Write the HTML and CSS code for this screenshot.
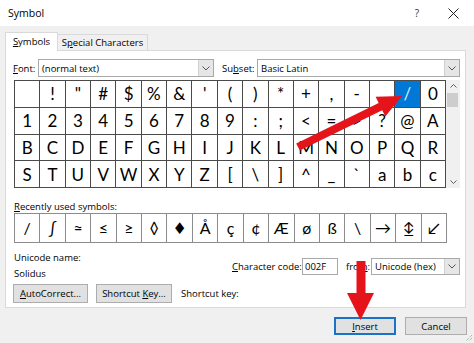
FILE: index.html
```html
<!DOCTYPE html>
<html>
<head>
<meta charset="utf-8">
<title>Symbol</title>
<link rel="stylesheet" href="styles.css">
</head>
<body>
<div class="window">
  <div class="titlebar">
    <span class="title">Symbol</span>
    <span class="help">?</span>
    <svg class="close" width="11" height="11" viewBox="0 0 11 11"><path d="M0.5 0.5 L10.5 10.5 M10.5 0.5 L0.5 10.5" stroke="#222" stroke-width="1"/></svg>
  </div>
  <div class="content">
    <div class="tabs">
      <div class="tab active"><span><u>S</u>ymbols</span></div>
      <div class="tab"><span>S<u>p</u>ecial Characters</span></div>
    </div>
    <div class="panel">
      <div class="font-row">
        <span class="lbl font-lbl"><u>F</u>ont:</span>
        <div class="select font-sel"><span class="val">(normal text)</span><span class="arrow"><svg width="8" height="5" viewBox="0 0 8 5"><path d="M0.5 0.5 L4 4 L7.5 0.5" fill="none" stroke="#555" stroke-width="1"/></svg></span></div>
        <span class="lbl subset-lbl">Su<u>b</u>set:</span>
        <div class="select subset-sel"><span class="val">Basic Latin</span><span class="arrow"><svg width="8" height="5" viewBox="0 0 8 5"><path d="M0.5 0.5 L4 4 L7.5 0.5" fill="none" stroke="#555" stroke-width="1"/></svg></span></div>
      </div>
      <div class="grid-wrap">
        <div class="grid">
          <span class="cell"> </span><span class="cell">!</span><span class="cell">&quot;</span><span class="cell">#</span><span class="cell">$</span><span class="cell">%</span><span class="cell">&amp;</span><span class="cell">'</span><span class="cell">(</span><span class="cell">)</span><span class="cell">*</span><span class="cell">+</span><span class="cell">,</span><span class="cell">-</span><span class="cell">.</span><span class="cell sel">/</span><span class="cell">0</span>
          <span class="cell">1</span><span class="cell">2</span><span class="cell">3</span><span class="cell">4</span><span class="cell">5</span><span class="cell">6</span><span class="cell">7</span><span class="cell">8</span><span class="cell">9</span><span class="cell">:</span><span class="cell">;</span><span class="cell">&lt;</span><span class="cell">=</span><span class="cell">&gt;</span><span class="cell">?</span><span class="cell">@</span><span class="cell">A</span>
          <span class="cell">B</span><span class="cell">C</span><span class="cell">D</span><span class="cell">E</span><span class="cell">F</span><span class="cell">G</span><span class="cell">H</span><span class="cell">I</span><span class="cell">J</span><span class="cell">K</span><span class="cell">L</span><span class="cell">M</span><span class="cell">N</span><span class="cell">O</span><span class="cell">P</span><span class="cell">Q</span><span class="cell">R</span>
          <span class="cell">S</span><span class="cell">T</span><span class="cell">U</span><span class="cell">V</span><span class="cell">W</span><span class="cell">X</span><span class="cell">Y</span><span class="cell">Z</span><span class="cell">[</span><span class="cell">\</span><span class="cell">]</span><span class="cell">^</span><span class="cell">_</span><span class="cell">`</span><span class="cell">a</span><span class="cell">b</span><span class="cell">c</span>
        </div>
        <div class="scrollbar">
          <span class="sb-btn"><svg width="7" height="4" viewBox="0 0 7 4"><path d="M0.5 3.5 L3.5 0.5 L6.5 3.5" fill="none" stroke="#606060" stroke-width="1"/></svg></span>
          <span class="sb-thumb"></span>
          <span class="sb-track"></span>
          <span class="sb-btn"><svg width="7" height="4" viewBox="0 0 7 4"><path d="M0.5 0.5 L3.5 3.5 L6.5 0.5" fill="none" stroke="#606060" stroke-width="1"/></svg></span>
        </div>
      </div>
      <div class="recent-lbl"><u>R</u>ecently used symbols:</div>
      <div class="recent">
        <span class="rcell">/</span><span class="rcell">∫</span><span class="rcell">≈</span><span class="rcell">≤</span><span class="rcell">≥</span><span class="rcell">◊</span><span class="rcell">♦</span><span class="rcell">Å</span><span class="rcell">ç</span><span class="rcell">¢</span><span class="rcell">Æ</span><span class="rcell">ø</span><span class="rcell">ß</span><span class="rcell">\</span><span class="rcell">→</span><span class="rcell">↨</span><span class="rcell">↙</span>
      </div>
      <div class="info-row">
        <div class="uname">
          <div>Unicode name:</div>
          <div>Solidus</div>
        </div>
        <div class="code">
          <span class="code-lbl"><u>C</u>haracter code:</span>
          <span class="input">002F</span>
          <span class="from-lbl">fro<u>m</u>:</span>
          <div class="select from-sel"><span class="val">Unicode (hex)</span><span class="arrow"><svg width="8" height="5" viewBox="0 0 8 5"><path d="M0.5 0.5 L4 4 L7.5 0.5" fill="none" stroke="#555" stroke-width="1"/></svg></span></div>
        </div>
      </div>
      <div class="btn-row">
        <span class="btn auto"><span><u>A</u>utoCorrect...</span></span>
        <span class="btn shortcut"><span>Shortcut <u>K</u>ey...</span></span>
        <span class="sk-lbl">Shortcut key:</span>
      </div>
    </div>
    <div class="footer">
      <span class="btn default"><span><u>I</u>nsert</span></span>
      <span class="btn"><span>Cancel</span></span>
    </div>
  </div>
  <svg class="arrows" width="474" height="343" viewBox="0 0 474 343">
    <polygon fill="#e5141b" points="299.8,150.6 382.2,110.2 385.3,116.4 402,96 375.6,96.7 378.7,103 296.2,143.4"/>
    <polygon fill="#e5141b" points="356.5,261 365.5,261 365.5,293 374,293 360.5,320 347,293 356.5,293"/>
  </svg>
  <svg class="grip" width="8" height="8" viewBox="0 0 8 8">
    <path d="M7 1 L1 7 M7 4 L4 7" stroke="#999" stroke-width="1" stroke-dasharray="1 1"/>
  </svg>
</div>
</body>
</html>
```
FILE: styles.css
```css
* { box-sizing: border-box; }
html, body { margin: 0; padding: 0; }
body {
  width: 474px;
  height: 343px;
  overflow: hidden;
  background: #f0f0f0;
  font-family: "Open Sans", "Noto Sans", sans-serif;
  font-size: 9.5px;
  color: #000;
}
u { text-decoration: underline; text-underline-offset: 1px; }
.window { position: relative; width: 474px; height: 343px; }

.titlebar {
  height: 26px;
  background: #fff;
  display: flex;
  align-items: center;
  padding-left: 8px;
}
.title { flex: 1; font-size: 10.5px; }
.help { font-size: 10px; color: #333; margin-right: 29px; }
.close { margin-right: 15px; }

.content { padding: 6px 7px 0 5px; }

.tabs { display: flex; align-items: flex-end; height: 18px; }
.tab {
  height: 16px;
  display: flex;
  align-items: center;
  justify-content: center;
  border: 1px solid #d9d9d9;
  border-bottom: none;
  background: #f0f0f0;
  width: 91px;
  margin-left: -1px;
}
.tab.active {
  width: 53px;
  height: 19px;
  margin-left: 0;
  margin-bottom: -1px;
  background: #fff;
  position: relative;
  z-index: 1;
  padding-bottom: 1px;
}

.panel {
  width: 461px;
  height: 258px;
  background: #fff;
  border: 1px solid #d9d9d9;
  padding: 8px 0 0 8px;
}

.font-row { display: flex; align-items: center; height: 18px; }
.lbl { display: inline-block; }
.font-lbl { width: 25px; margin-left: -1px; }
.subset-lbl { width: 35px; margin-left: 8px; }
.select {
  height: 18px;
  border: 1px solid #a9a9a9;
  background: #fff;
  display: flex;
  align-items: center;
}
.select .val { flex: 1; padding-left: 3px; white-space: nowrap; }
.select .arrow {
  width: 15px;
  height: 100%;
  background: #e6e6e6;
  border-left: 1px solid #d0d0d0;
  display: flex;
  align-items: center;
  justify-content: center;
}
.font-sel { width: 176px; }
.subset-sel { width: 203px; }

.grid-wrap { display: flex; margin-top: 3px; height: 108px; }
.grid {
  width: 432px;
  height: 108px;
  display: grid;
  grid-template-columns: repeat(17, 1fr);
  grid-template-rows: repeat(4, 1fr);
  gap: 1px;
  background: #4a4a4a;
  border: 1px solid #4a4a4a;
}
.cell {
  background: #fff;
  display: flex;
  align-items: center;
  justify-content: center;
  font-family: "Lato", "DejaVu Sans", sans-serif;
  font-size: 17px;
  line-height: 1;
}
.cell.sel { background: #0078d7; color: #d6ecff; }

.scrollbar {
  width: 14px;
  height: 108px;
  background: #f0f0f0;
  display: flex;
  flex-direction: column;
}
.sb-btn { height: 12px; display: flex; align-items: center; justify-content: center; }
.sb-thumb { height: 14px; margin: 1px 2px 0 1px; background: #cdcdcd; }
.sb-track { flex: 1; }

.recent-lbl { margin-top: 12px; line-height: 13px; height: 13px; }
.recent {
  width: 433px;
  height: 30px;
  display: grid;
  grid-template-columns: repeat(17, 1fr);
  gap: 1px;
  background: #8c8c8c;
  border: 1px solid #8c8c8c;
}
.rcell {
  background: #fff;
  display: flex;
  align-items: center;
  justify-content: center;
  font-family: "Lato", "DejaVu Sans", sans-serif;
  font-size: 16px;
  line-height: 1;
}

.info-row { display: flex; margin-top: 7px; height: 32px; }
.uname { width: 218px; line-height: 16px; }
.code { display: flex; align-items: center; }
.code-lbl { width: 70px; white-space: nowrap; }
.input {
  width: 36px;
  height: 17px;
  border: 1px solid #a9a9a9;
  padding-left: 2px;
  display: flex;
  align-items: center;
}
.from-lbl { margin-left: 8px; width: 25px; }
.from-sel { width: 89px; height: 17px; }

.btn-row { display: flex; align-items: center; margin-top: 2px; height: 19px; }
.btn {
  height: 19px;
  background: #e1e1e1;
  border: 1px solid #adadad;
  display: flex;
  align-items: center;
  justify-content: center;
  white-space: nowrap;
}
.auto { width: 75px; margin-left: -1px; }
.shortcut { width: 76px; margin-left: 8px; }
.sk-lbl { margin-left: 9px; }

.footer { display: flex; justify-content: flex-end; gap: 9px; margin-top: 9px; }
.footer .btn { width: 62px; height: 18px; }
.footer .btn.default { border: 2px solid #1a73c9; }

.arrows { position: absolute; left: 0; top: 0; pointer-events: none; }
.grip { position: absolute; right: 1px; bottom: 1px; }
```
